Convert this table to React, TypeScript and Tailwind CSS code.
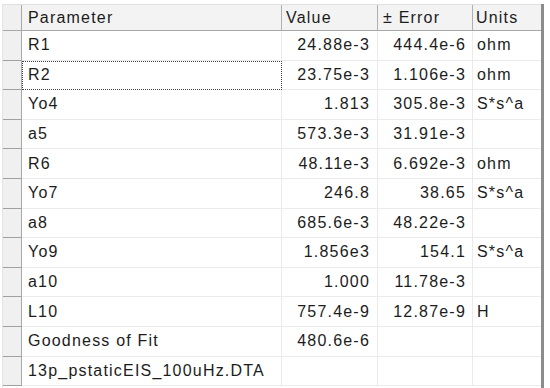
import React from 'react';

type Row = { name: string; value?: string; error?: string; units?: string };

const rows: Row[] = [
  { name: 'R1', value: '24.88e-3', error: '444.4e-6', units: 'ohm' },
  { name: 'R2', value: '23.75e-3', error: '1.106e-3', units: 'ohm' },
  { name: 'Yo4', value: '1.813', error: '305.8e-3', units: 'S*s^a' },
  { name: 'a5', value: '573.3e-3', error: '31.91e-3' },
  { name: 'R6', value: '48.11e-3', error: '6.692e-3', units: 'ohm' },
  { name: 'Yo7', value: '246.8', error: '38.65', units: 'S*s^a' },
  { name: 'a8', value: '685.6e-3', error: '48.22e-3' },
  { name: 'Yo9', value: '1.856e3', error: '154.1', units: 'S*s^a' },
  { name: 'a10', value: '1.000', error: '11.78e-3' },
  { name: 'L10', value: '757.4e-9', error: '12.87e-9', units: 'H' },
  { name: 'Goodness of Fit', value: '480.6e-6' },
  { name: '13p_pstaticEIS_100uHz.DTA' },
];

const App: React.FC = () => {
  return (
    <div
      className="w-[550px] h-[388px] overflow-hidden bg-white pt-[4px] pl-[2px] text-[16px] tracking-[1.2px] text-[#1c1c1c]"
      style={{ fontFamily: '"Liberation Sans", Arial, sans-serif' }}
    >
      <div className="w-[542px] h-[384px] border-r-[3px] border-[#8c8c8c] border-l border-l-[#e4e4e4] flex flex-col">
        {/* Kopfzeile */}
        <div className="flex h-[27px] shrink-0 bg-[#f3f3f3] border-t border-[#e0e0e0] border-b border-b-[#a8a8a8]">
          <div className="w-[19px] shrink-0 border-r border-[#a8a8a8] bg-[#f0f0f0]" />
          <div className="w-[260px] shrink-0 border-r border-[#b0b0b0] pl-[6px] flex items-center">Parameter</div>
          <div className="w-[96px] shrink-0 border-r border-[#b0b0b0] pl-[4px] flex items-center">Value</div>
          <div className="w-[95px] shrink-0 border-r border-[#b0b0b0] pl-[5px] flex items-center">± Error</div>
          <div className="flex-1 pl-[3px] flex items-center">Units</div>
        </div>

        {/* Datenzeilen */}
        {rows.map((r, i) => (
          <div key={i} className="flex h-[29.6px] shrink-0">
            <div className="w-[19px] shrink-0 bg-[#f0f0f0] border-r border-[#a8a8a8] border-b border-b-[#a0a0a0]" />
            <div
              className={
                i === 1
                  ? 'w-[260px] shrink-0 border border-dotted border-[#444] pl-[5px] flex items-center'
                  : 'w-[260px] shrink-0 border-r border-b border-[#ebebeb] pl-[6px] flex items-center'
              }
            >
              {r.name}
            </div>
            <div className="w-[96px] shrink-0 border-r border-b border-[#ebebeb] pr-[7px] flex items-center justify-end">
              {r.value}
            </div>
            <div className="w-[95px] shrink-0 border-r border-b border-[#ebebeb] pr-[6px] flex items-center justify-end">
              {r.error}
            </div>
            <div className="flex-1 border-b border-[#ebebeb] pl-[4px] flex items-center">{r.units}</div>
          </div>
        ))}
      </div>
    </div>
  );
};

export default App;
